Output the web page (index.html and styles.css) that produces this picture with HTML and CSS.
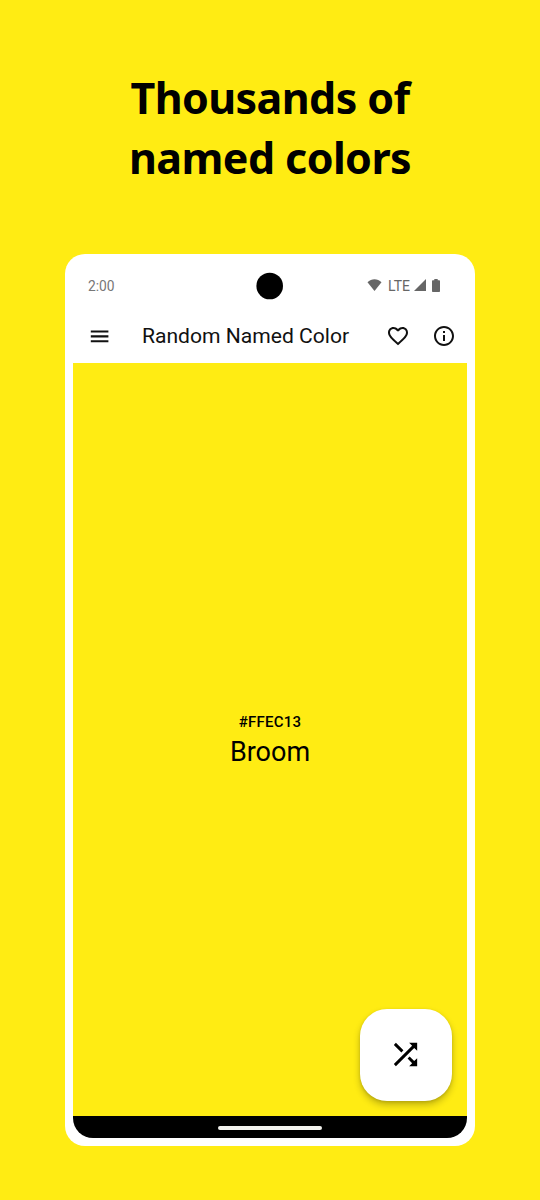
FILE: index.html
```html
<!DOCTYPE html>
<html lang="en">
<head>
<meta charset="utf-8">
<title>Random Named Color</title>
<link rel="stylesheet" href="styles.css">
</head>
<body>
<main class="page">
  <h1 class="headline"><span class="line-one">Thousands of</span><br><span class="line-two">named colors</span></h1>
  <section class="phone">
    <div class="screen">
      <div class="status">
        <span class="time">2:00</span>
        <svg class="camera" viewBox="0 0 28 28"><circle cx="13.7" cy="14" r="13.3"/></svg>
        <div class="signals">
          <svg class="wifi" viewBox="0 0 14 12"><path d="M0 3.2C4 -.9 10 -.9 14 3.2L7 12Z"/></svg>
          <span class="lte">LTE</span>
          <svg class="cell" viewBox="0 0 12 12"><path d="M12 0V12H0Z"/></svg>
          <svg class="battery" viewBox="0 0 8 13"><path d="M2.3 0H5.7V1.3H7.2Q8 1.3 8 2.1V12.2Q8 13 7.2 13H.8Q0 13 0 12.2V2.1Q0 1.3 .8 1.3H2.3Z"/></svg>
        </div>
      </div>
      <header class="appbar">
        <svg class="icon" viewBox="0 0 24 24"><path d="M2.8 18.3h17.6v-2.1H2.8v2.1zm0-4.9h17.6v-2.1H2.8v2.1zm0-7v2.1h17.6V6.400H2.8z"/></svg>
        <h2 class="title">Random Named Color</h2>
        <svg class="icon heart" viewBox="0 0 24 24"><path d="M16.5 3c-1.74 0-3.41.81-4.5 2.09C10.91 3.81 9.24 3 7.5 3 4.42 3 2 5.42 2 8.5c0 3.78 3.4 6.86 8.55 11.54L12 21.35l1.45-1.32C18.6 15.36 22 12.28 22 8.5 22 5.42 19.58 3 16.5 3zm-4.4 15.55l-.1.1-.1-.1C7.14 14.24 4 11.39 4 8.5 4 6.5 5.5 5 7.5 5c1.54 0 3.04.99 3.57 2.36h1.87C13.46 5.99 14.96 5 16.5 5c2 0 3.5 1.5 3.5 3.5 0 2.89-3.14 5.74-7.9 10.05z"/></svg>
        <svg class="icon info" viewBox="0 0 24 24"><path d="M11 7h2v2h-2zm0 4h2v6h-2zm1-9C6.480 2 2 6.480 2 12s4.480 10 10 10 10-4.480 10-10S17.520 2 12 2zm0 18c-4.410 0-8-3.590-8-8s3.590-8 8-8 8 3.590 8 8-3.590 8-8 8z"/></svg>
      </header>
      <div class="swatch">
        <div class="hex">#FFEC13</div>
        <div class="name">Broom</div>
        <button class="fab" aria-label="Shuffle">
          <svg class="shuffle" viewBox="0 0 24 24"><path d="M10.59 9.17L5.41 4 4 5.41l5.17 5.17 1.42-1.41zM14.5 4l2.04 2.04L4 18.59 5.41 20 17.96 7.46 20 9.5V4h-5.5zm.33 9.41l-1.41 1.41 3.13 3.13L14.5 20H20v-5.5l-2.04 2.04-3.13-3.13z"/></svg>
        </button>
      </div>
      <div class="navbar"><span class="handle"></span></div>
    </div>
  </section>
</main>
</body>
</html>
```
FILE: styles.css
```css
* { box-sizing: border-box; }
body { margin: 0; background: #ffec13; font-family: Roboto, sans-serif; color: #000; }
.page { height: 1200px; display: flex; flex-direction: column; align-items: center; padding-top: 68px; overflow: hidden; }
.headline { margin: 0; height: 186px; font: 700 43px/60px "Noto Sans", sans-serif; letter-spacing: -.6px; text-align: center; white-space: nowrap; }
.phone { width: 410px; height: 892px; padding: 8px; background: #fff; border-radius: 20px; }
.screen { height: 876px; display: flex; flex-direction: column; border-radius: 0 0 20px 20px; overflow: hidden; }
.status { height: 47px; display: grid; grid-template-columns: 168px 28px 1fr; align-items: center; padding: 0 27px 0 15px; color: #666; }
.time { font-size: 13.8px; color: #777; }
.camera { width: 28px; height: 28px; fill: #000; }
.signals { display: flex; align-items: center; justify-content: flex-end; }
.signals svg { fill: #666; margin-bottom: 1px; }
.wifi { width: 15px; height: 12px; }
.lte { font-size: 14px; margin: 0 4px 0 6px; }
.cell { width: 12px; height: 12px; }
.signals .battery { width: 8px; height: 13px; margin-left: 6px; }
.appbar { height: 54px; display: flex; align-items: center; padding: 0 11px 0 15px; }
.icon { width: 24px; height: 24px; flex: none; fill: #111; }
.heart { margin-right: 22px; }
.title { margin: 0 0 1px 30px; flex: 1; font-size: 21.1px; font-weight: 400; color: #111; white-space: nowrap; }
.swatch { position: relative; height: 753px; background: #ffec13; text-align: center; padding-top: 349px; }
.hex { font-size: 15px; line-height: 20px; font-weight: 500; letter-spacing: .25px; }
.name { font-size: 27px; line-height: 40px; }
.fab { position: absolute; right: 15px; bottom: 15px; width: 92px; height: 92px; padding: 0 1px 1px 0; border: 0; border-radius: 27px; background: #fff; display: grid; place-items: center; box-shadow: 0 4px 7px rgba(0,0,0,.24), 0 1px 3px rgba(0,0,0,.12); }
.shuffle { width: 35px; height: 35px; }
.navbar { flex: 1; background: #000; display: flex; align-items: center; justify-content: center; padding-top: 1px; }
.handle { width: 104px; height: 4px; border-radius: 2px; background: #f2f2ee; }
```
